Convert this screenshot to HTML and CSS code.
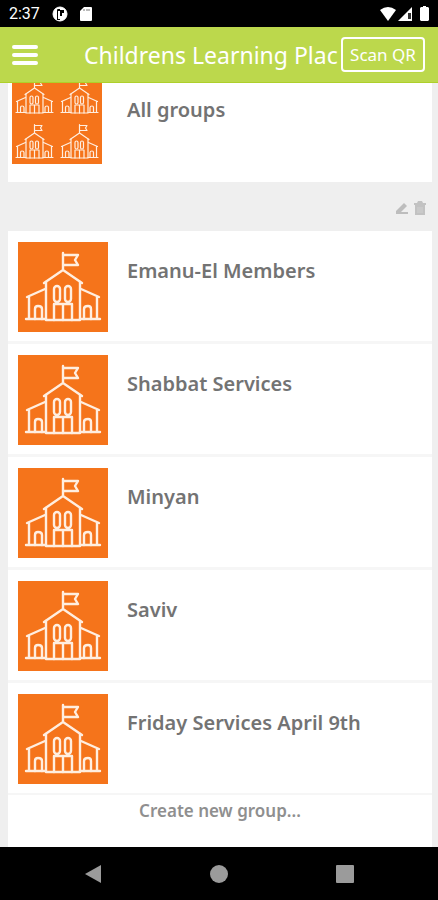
FILE: index.html
```html
<!DOCTYPE html>
<html lang="en">
<head>
    <meta charset="UTF-8">
    <meta name="viewport" content="width=device-width, initial-scale=1.0">
    <title>Childrens Learning Place</title>
    <link rel="stylesheet" href="styles.css">
</head>
<body>
    <!-- Shared school drawing -->
    <svg class="defs" aria-hidden="true">
        <symbol id="school" viewBox="0 0 90 90">
            <g fill="none" stroke="#ffeee0" stroke-width="2.4" stroke-linejoin="round" stroke-linecap="round">
                <path d="M45 27V11M45 13H60L57 18L60 23H45"/>
                <path d="M26 41L45 28L64 41"/>
                <path d="M28 40V78H62V40"/>
                <path d="M27 47L9 55M63 47L81 55M11 55V76M79 55V76"/>
                <path d="M8 77H28M62 77H82"/>
                <path d="M17 77V67Q17 64 20 64Q24 64 24 67V77M66 77V67Q66 64 70 64Q73 64 73 67V77"/>
                <rect x="36" y="44" width="6" height="16" rx="3"/>
                <rect x="47" y="44" width="6" height="16" rx="3"/>
                <path d="M36 78V62H54V78M45 62V78"/>
            </g>
        </symbol>
    </svg>

    <div class="status">
        <span class="time">2:37</span>
        <svg width="16" height="16" viewBox="0 0 16 16">
            <circle cx="8" cy="8" r="7" fill="#fff" stroke="#fff" stroke-width="1"/>
            <path d="M5 14V4Q5 3 6 3H8V14Z" fill="#000"/>
            <path d="M8 4H12V7H10V10H8Z" fill="#000"/>
            <path d="M6 5H8V13H6Z" fill="#fff"/>
        </svg>
        <svg width="12" height="14" viewBox="0 0 12 14">
            <path d="M4 0H11Q12 0 12 1V13Q12 14 11 14H1Q0 14 0 13V4Z" fill="#fff"/>
            <path d="M4 2V4M7 2V4M9 2V4" stroke="#777" stroke-width="1"/>
        </svg>
        <span class="signals">
            <svg width="16" height="14" viewBox="0 0 16 14"><path d="M0 3Q8 -3 16 3L8 14Z" fill="#fff"/></svg>
            <svg width="14" height="14" viewBox="0 0 14 14">
                <path d="M14 0V14H0Z" fill="#fff"/>
                <path d="M10 6H13V12H10Z" fill="#333"/>
            </svg>
            <svg class="battery" width="9" height="15" viewBox="0 0 9 15"><path d="M3 0H6V1H8L9 2V14L8 15H1L0 14V2L1 1H3Z" fill="#fff"/></svg>
        </span>
    </div>

    <header class="header">
        <button type="button" class="menu" aria-label="Menu">
            <svg width="26" height="20" viewBox="0 0 26 20">
                <path d="M2 2H24M2 10H24M2 18H24" stroke="#fff" stroke-width="4" stroke-linecap="round"/>
            </svg>
        </button>
        <h1 class="title">Childrens Learning Plac</h1>
        <button type="button" class="scan">Scan QR</button>
    </header>

    <main class="content">
        <section class="all-groups">
            <div class="thumb grid">
                <svg><use href="#school"/></svg>
                <svg><use href="#school"/></svg>
                <svg><use href="#school"/></svg>
                <svg><use href="#school"/></svg>
            </div>
            <h2 class="name">All groups</h2>
        </section>

        <div class="tools">
            <button type="button" aria-label="Edit">
                <svg width="14" height="14" viewBox="0 0 14 14">
                    <path d="M1 10L9 2L12 5L5 12H1Z" fill="#bdbdbd"/>
                    <path d="M1 12H13" stroke="#bdbdbd" stroke-width="2"/>
                </svg>
            </button>
            <button type="button" aria-label="Delete">
                <svg width="14" height="14" viewBox="0 0 14 14">
                    <path d="M1 2H4L5 0H9L10 2H13V4H1ZM2 4H12V14H2Z" fill="#c2c2c2"/>
                    <path d="M5 6V12M7 6V12M9 6V12" stroke="#d0d0d0"/>
                </svg>
            </button>
        </div>

        <ul class="groups">
            <li class="group">
                <svg class="thumb"><use href="#school"/></svg>
                <h2 class="name">Emanu-El Members</h2>
            </li>
            <li class="group">
                <svg class="thumb"><use href="#school"/></svg>
                <h2 class="name">Shabbat Services</h2>
            </li>
            <li class="group">
                <svg class="thumb"><use href="#school"/></svg>
                <h2 class="name">Minyan</h2>
            </li>
            <li class="group">
                <svg class="thumb"><use href="#school"/></svg>
                <h2 class="name">Saviv</h2>
            </li>
            <li class="group">
                <svg class="thumb"><use href="#school"/></svg>
                <h2 class="name">Friday Services April 9th</h2>
            </li>
        </ul>
        <button type="button" class="create">Create new group...</button>
    </main>

    <nav class="navbar">
        <button type="button" aria-label="Back">
            <svg width="18" height="20" viewBox="0 0 18 20"><path d="M17 1V19L1 10Z" fill="#9b9b9b"/></svg>
        </button>
        <button type="button" aria-label="Home">
            <svg width="18" height="18" viewBox="0 0 18 18"><circle cx="9" cy="9" r="9" fill="#9b9b9b"/></svg>
        </button>
        <button type="button" aria-label="Recent">
            <svg width="18" height="18" viewBox="0 0 18 18"><rect width="18" height="18" rx="1" fill="#9b9b9b"/></svg>
        </button>
    </nav>
</body>
</html>
```

FILE: styles.css
```css
* {
    box-sizing: border-box;
}

body {
    margin: 0;
    height: 100vh;
    display: flex;
    flex-direction: column;
    background: #efefef;
    color: #737373;
    font-family: "Noto Sans", sans-serif;
    overflow: hidden;
}

button {
    border: none;
    background: none;
    padding: 0;
    font-family: inherit;
    cursor: pointer;
}

svg {
    display: block;
}

.defs {
    position: absolute;
    width: 0;
    height: 0;
}

.status {
    flex: none;
    display: flex;
    align-items: center;
    gap: 12px;
    height: 27px;
    padding: 0 9px;
    background: #000;
    color: #fff;
}

.time {
    font-family: Roboto, sans-serif;
    font-size: 16px;
}

.signals {
    display: flex;
    align-items: center;
    gap: 2px;
    margin-left: auto;
}

.battery {
    margin-left: 6px;
}

.header {
    flex: none;
    z-index: 1;
    display: flex;
    align-items: center;
    height: 56px;
    padding: 0 13px 0 12px;
    background: #bcd84c;
    border-bottom: 1px solid #aed02a;
}

.menu {
    width: 72px;
}

.title {
    flex: 1;
    min-width: 0;
    margin: 0;
    overflow: hidden;
    white-space: nowrap;
    color: #fff;
    font-size: 23px;
    font-weight: 400;
}

.scan {
    flex: none;
    width: 84px;
    height: 35px;
    border: 2px solid #fff;
    border-radius: 4px;
    color: #fff;
    font-size: 17px;
}

.content {
    flex: 1;
    min-height: 0;
    display: flex;
    flex-direction: column;
    padding: 0 6px 0 8px;
}

.all-groups {
    flex: none;
    display: flex;
    gap: 25px;
    margin-top: -18px;
    padding: 9px 4px 18px;
    background: #fff;
}

.all-groups .name {
    margin-top: 23px;
}

.thumb {
    flex: none;
    width: 90px;
    height: 90px;
    background: #f5741b;
}

.grid {
    display: grid;
    grid-template-columns: 1fr 1fr;
}

.grid svg {
    width: 45px;
    height: 45px;
}

.name {
    margin: 16px 0 0;
    font-size: 20px;
    line-height: 26px;
    font-weight: 600;
}

.tools {
    flex: none;
    display: flex;
    justify-content: flex-end;
    align-items: center;
    gap: 4px;
    height: 49px;
    padding: 3px 5px 0 0;
}

.groups {
    flex: none;
    margin: 0;
    padding: 0;
    list-style: none;
}

.group {
    display: flex;
    gap: 19px;
    padding: 11px 10px 9px;
    background: #fff;
    border-bottom: 3px solid #f6f6f6;
}

.group:last-child {
    border-bottom-width: 2px;
}

.create {
    flex: 1;
    display: flex;
    justify-content: center;
    padding-top: 4px;
    background: #fff;
    color: #8f8f8f;
    font-size: 17px;
    line-height: 24px;
    font-weight: 600;
}

.navbar {
    flex: none;
    display: flex;
    justify-content: center;
    align-items: center;
    gap: 108px;
    height: 53px;
    background: #000;
}
```
